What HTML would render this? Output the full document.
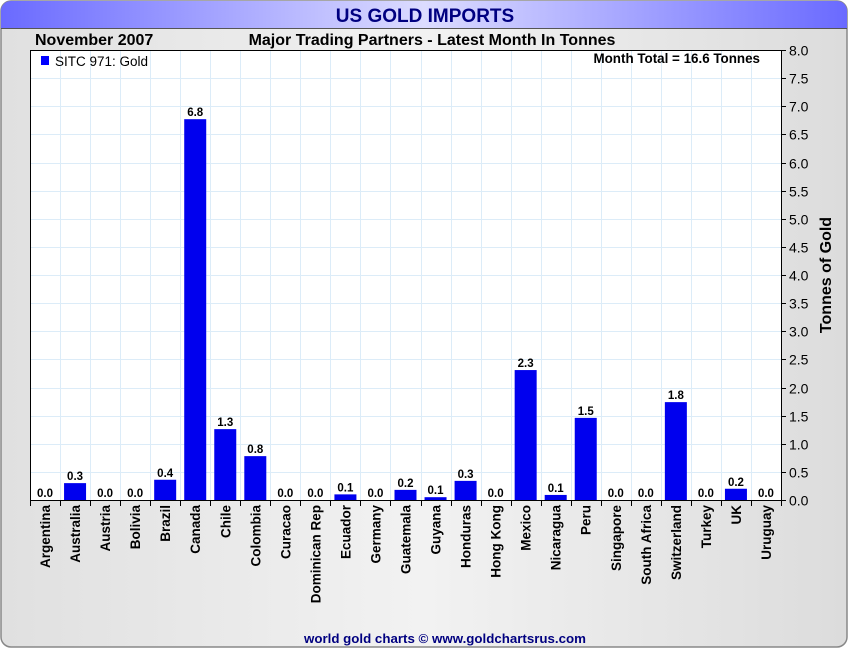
<!DOCTYPE html><html><head><style>body{margin:0;background:#fff}svg{display:block}text{font-family:"Liberation Sans",sans-serif}</style></head><body>
<svg width="850" height="650" xmlns="http://www.w3.org/2000/svg">
<defs>
<linearGradient id="hd" x1="0" x2="1"><stop offset="0" stop-color="#6a6aff"/><stop offset="0.5" stop-color="#dcdcff"/><stop offset="1" stop-color="#6a6aff"/></linearGradient>
<linearGradient id="bg" x1="0" x2="1"><stop offset="0" stop-color="#e0e0e0"/><stop offset="0.5" stop-color="#f2f2f2"/><stop offset="1" stop-color="#dcdcdc"/></linearGradient>
</defs>
<rect x="1" y="1" width="846" height="646" rx="10" fill="url(#bg)" stroke="#888" stroke-width="1.5"/>
<path d="M1 28 V11 A10 10 0 0 1 11 1 H837 A10 10 0 0 1 847 11 V28 Z" fill="url(#hd)"/>
<line x1="1" y1="28.5" x2="847" y2="28.5" stroke="#555"/>
<text x="425" y="22" text-anchor="middle" font-size="19" font-weight="bold" fill="#000080">US GOLD IMPORTS</text>
<text x="35" y="45" font-size="16" font-weight="bold">November 2007</text>
<text x="432" y="45" text-anchor="middle" font-size="16" font-weight="bold">Major Trading Partners - Latest Month In Tonnes</text>
<rect x="30.5" y="50.5" width="751" height="450" fill="#fff"/>
<g id="g" stroke="#dcecf8" stroke-width="1"></g>
<rect x="30.5" y="50.5" width="751" height="450" fill="none" stroke="#000"/>
<g id="b"></g>
<rect x="41" y="56" width="8" height="9" fill="#0000ff"/>
<text x="55" y="66" font-size="13.5">SITC 971: Gold</text>
<text x="760" y="63" text-anchor="end" font-size="13.4" font-weight="bold">Month Total = 16.6 Tonnes</text>
<text transform="translate(831,275) rotate(-90)" text-anchor="middle" font-size="16" font-weight="bold">Tonnes of Gold</text>
<text x="445" y="643" text-anchor="middle" font-size="13.3" font-weight="bold" fill="#000080">world gold charts © www.goldchartsrus.com</text>
</svg>
<script>
var ns="http://www.w3.org/2000/svg",svg=document.querySelector('svg'),g=document.getElementById('g'),b=document.getElementById('b');
function el(p,t,a,txt){var e=document.createElementNS(ns,t);for(var k in a)e.setAttribute(k,a[k]);if(txt!=null)e.textContent=txt;p.appendChild(e);return e;}
var names=["Argentina","Australia","Austria","Bolivia","Brazil","Canada","Chile","Colombia","Curacao","Dominican Rep","Ecuador","Germany","Guatemala","Guyana","Honduras","Hong Kong","Mexico","Nicaragua","Peru","Singapore","South Africa","Switzerland","Turkey","UK","Uruguay"];
var v=[0,0.3,0,0,0.36,6.77,1.26,0.78,0,0,0.1,0,0.18,0.05,0.34,0,2.31,0.09,1.46,0,0,1.74,0,0.2,0];
var lab=["0.0","0.3","0.0","0.0","0.4","6.8","1.3","0.8","0.0","0.0","0.1","0.0","0.2","0.1","0.3","0.0","2.3","0.1","1.5","0.0","0.0","1.8","0.0","0.2","0.0"];
var W=751/25,u=56.25;
for(var i=1;i<25;i++){var x=Math.round(30+i*W)+.5;el(g,'line',{x1:x,y1:51,x2:x,y2:500});}
for(var j=1;j<16;j++){var y=Math.round(500-j*u/2)+.5;el(g,'line',{x1:31,y1:y,x2:781,y2:y});}
for(var j=0;j<=16;j++){var y=Math.round(500-j*u/2)+.5;el(svg,'line',{x1:781,y1:y,x2:786,y2:y,stroke:'#000'});el(svg,'text',{x:789,y:y+5,'font-size':14},(j/2).toFixed(1));}
for(var i=0;i<25;i++){var c=30+(i+.5)*W,h=v[i]*u;
if(h>0)el(b,'rect',{x:c-11,y:500-h,width:22,height:h,fill:'#0000ee'});
el(b,'text',{x:c,y:497-h,'text-anchor':'middle','font-size':11.5,'font-weight':'bold'},lab[i]);
var tx=Math.round(30+i*W)+.5;el(b,'line',{x1:tx,y1:500,x2:tx,y2:506,stroke:'#000'});
el(b,'text',{transform:'translate('+(c+5)+',505) rotate(-90)','text-anchor':'end','font-size':13.5,'font-weight':'bold'},names[i]);}
el(b,'line',{x1:781.5,y1:500,x2:781.5,y2:506,stroke:'#000'});
</script>
</body></html>
